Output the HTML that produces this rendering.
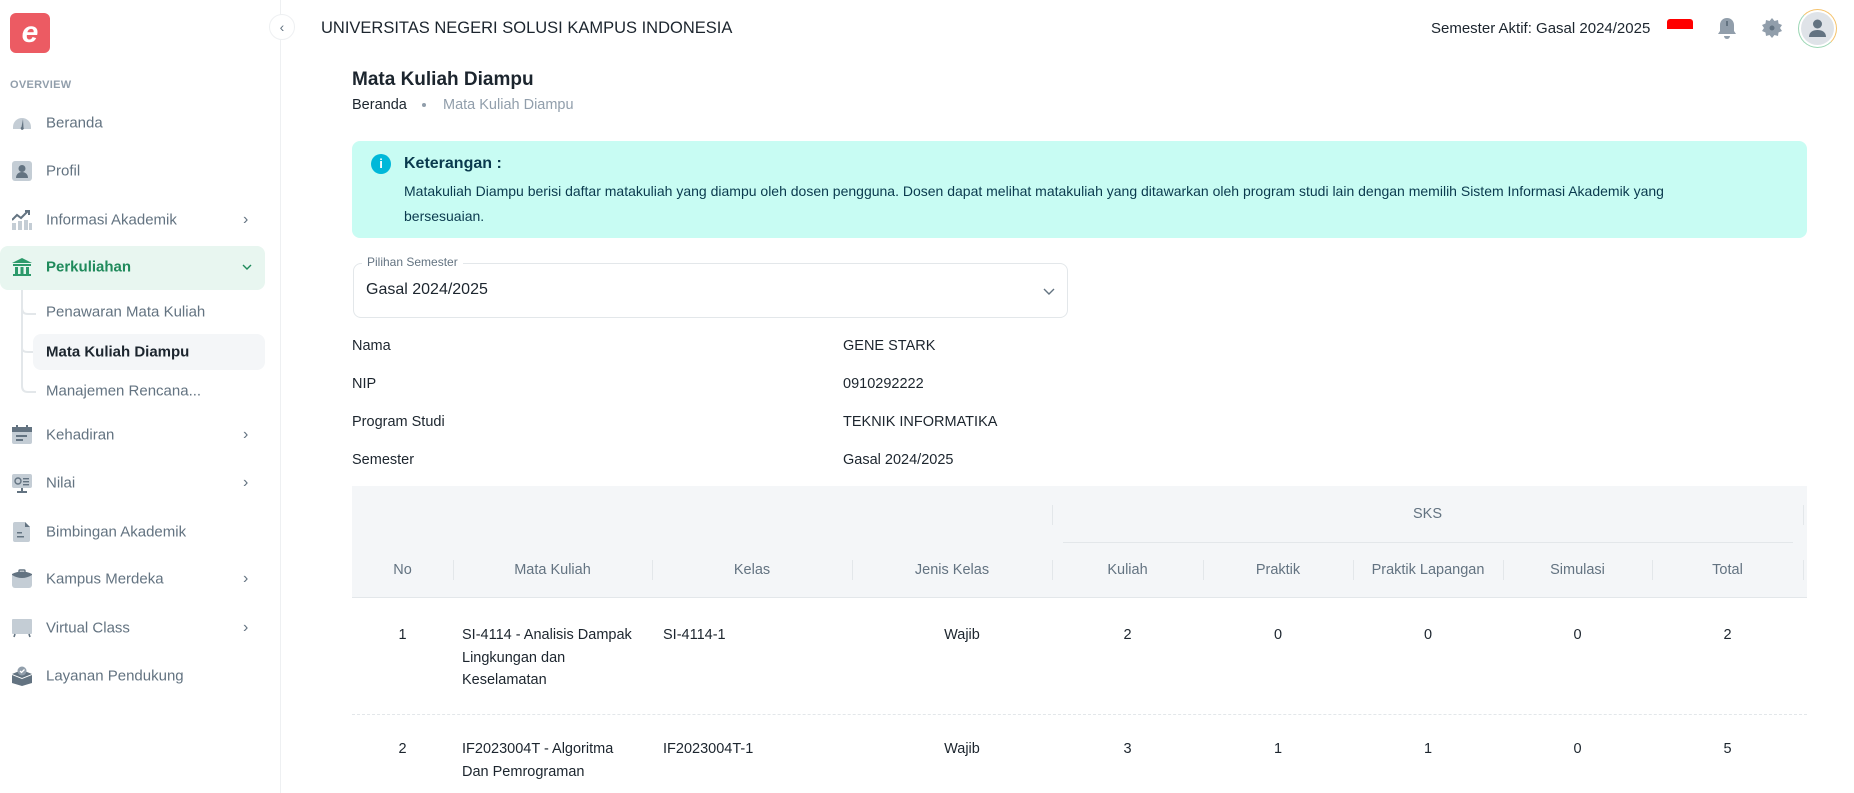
<!DOCTYPE html>
<html><head><meta charset="utf-8"><style>
*{box-sizing:border-box;margin:0;padding:0}
body{width:1854px;height:793px;overflow:hidden;background:#fff;font-family:"Liberation Sans",sans-serif;color:#1c252e;position:relative}
.abs{position:absolute}
.side{position:absolute;left:0;top:0;width:281px;height:793px;border-right:1px solid #eef0f2}
.mi{position:absolute;left:46px;font-size:15px;color:#637381;transform:translateY(-50%);white-space:nowrap}
.ic{position:absolute;left:12px;width:20px;height:20px;transform:translateY(-50%)}
.chev{position:absolute;left:243px;transform:translateY(-50%)}
.lbl{position:absolute;left:352px;font-size:14.5px;transform:translateY(-50%)}
.val{position:absolute;left:843px;font-size:14.5px;transform:translateY(-50%)}
.th{position:absolute;top:570px;transform:translateY(-50%);text-align:center;font-size:14.5px;color:#637381}
.dv{position:absolute;width:1px;height:20px;background:#e3e7ea}
.td{position:absolute;font-size:14.5px;line-height:22.5px;color:#1c252e}
.c{text-align:center}
</style></head><body>
<div class="side">
  <div class="abs" style="left:10px;top:13px;width:40px;height:40px;background:#ec5b63;border-radius:6px;color:#fff;font-size:30px;font-weight:bold;text-align:center;line-height:40px;font-style:italic">e</div>
  <div class="abs" style="left:10px;top:79px;font-size:11px;font-weight:bold;color:#919eab;letter-spacing:.3px">OVERVIEW</div>

  <svg class="ic" style="top:123px" viewBox="0 0 20 20"><path d="M1 14a9 9 0 0 1 18 0v2H1z" fill="#c4cdd5"/><path d="M11 6l-1.5 8a1.5 1.5 0 1 0 2 .5z" fill="#637381"/></svg>
  <div class="mi" style="top:123px">Beranda</div>
  <svg class="ic" style="top:171px" viewBox="0 0 20 20"><rect x="0" y="0" width="20" height="20" rx="3" fill="#c4cdd5"/><circle cx="10" cy="7.5" r="3.5" fill="#637381"/><path d="M4 17c0-4 3-6 6-6s6 2 6 6z" fill="#637381"/></svg>
  <div class="mi" style="top:171px">Profil</div>
  <svg class="ic" style="top:220px" viewBox="0 0 20 20"><rect x="0" y="13" width="4" height="7" fill="#c4cdd5"/><rect x="6" y="11" width="4" height="9" fill="#c4cdd5"/><rect x="12" y="10" width="4" height="10" fill="#c4cdd5"/><rect x="17" y="13" width="3" height="7" fill="#c4cdd5"/><path d="M0 10l5-5 4 3 7-7" stroke="#637381" stroke-width="2" fill="none"/><path d="M13 1h4v4" stroke="#637381" stroke-width="2" fill="none"/></svg>
  <div class="mi" style="top:220px">Informasi Akademik</div>
  <div class="chev" style="top:220px;color:#637381">›</div>

  <div class="abs" style="left:0;top:246px;width:265px;height:44px;background:#e8f6f0;border-radius:8px"></div>
  <svg class="ic" style="top:267px" viewBox="0 0 20 20"><path d="M10 1L0 6h20z" fill="#2d9a6b"/><rect x="1" y="7" width="18" height="2" fill="#2d9a6b"/><rect x="3" y="10" width="3" height="7" fill="#2d9a6b"/><rect x="8.5" y="10" width="3" height="7" fill="#2d9a6b"/><rect x="14" y="10" width="3" height="7" fill="#2d9a6b"/><rect x="1" y="17" width="18" height="2" fill="#2d9a6b"/></svg>
  <div class="mi" style="top:267px;color:#1f8a5b;font-weight:bold">Perkuliahan</div>
  <svg class="abs" style="left:242px;top:264px" width="10" height="7" viewBox="0 0 10 7"><path d="M1 1l4 4 4-4" stroke="#1f8a5b" stroke-width="1.4" fill="none"/></svg>

  <svg class="abs" style="left:20px;top:290px" width="20" height="106"><path d="M2 0v96q0 6 6 6h8M2 18q0 6 6 6h8M2 58q0 4 6 4h8" stroke="#e3e7ea" stroke-width="2" fill="none"/></svg>
  <div class="mi" style="top:312px">Penawaran Mata Kuliah</div>
  <div class="abs" style="left:33px;top:334px;width:232px;height:36px;background:#f4f6f8;border-radius:8px"></div>
  <div class="mi" style="top:352px;color:#1c252e;font-weight:bold">Mata Kuliah Diampu</div>
  <div class="mi" style="top:391px">Manajemen Rencana...</div>

  <svg class="ic" style="top:435px" viewBox="0 0 20 20"><rect x="0" y="2" width="20" height="17" rx="2" fill="#c4cdd5"/><rect x="0" y="2" width="20" height="5" fill="#637381"/><rect x="4" y="0" width="2" height="4" fill="#637381"/><rect x="14" y="0" width="2" height="4" fill="#637381"/><rect x="4" y="10" width="11" height="2" fill="#637381"/><rect x="4" y="14" width="7" height="2" fill="#637381"/></svg>
  <div class="mi" style="top:435px">Kehadiran</div>
  <div class="chev" style="top:435px;color:#637381">›</div>
  <svg class="ic" style="top:483px" viewBox="0 0 20 20"><rect x="0" y="1" width="20" height="14" rx="2" fill="#c4cdd5"/><circle cx="6" cy="8" r="3" fill="none" stroke="#637381" stroke-width="1.4"/><rect x="11" y="5" width="6" height="1.4" fill="#637381"/><rect x="11" y="8" width="6" height="1.4" fill="#637381"/><rect x="11" y="11" width="6" height="1.4" fill="#637381"/><rect x="9" y="15" width="2" height="3" fill="#637381"/><rect x="5" y="18" width="10" height="2" fill="#637381"/></svg>
  <div class="mi" style="top:483px">Nilai</div>
  <div class="chev" style="top:483px;color:#637381">›</div>
  <svg class="ic" style="top:532px" viewBox="0 0 20 20"><path d="M3 0h10l5 5v13a2 2 0 0 1-2 2H3a2 2 0 0 1-2-2V2a2 2 0 0 1 2-2z" fill="#c4cdd5"/><path d="M13 0v5h5z" fill="#637381"/><rect x="5" y="10" width="5" height="1.5" fill="#637381"/><rect x="5" y="14" width="7" height="1.5" fill="#637381"/></svg>
  <div class="mi" style="top:532px">Bimbingan Akademik</div>
  <svg class="ic" style="top:579px" viewBox="0 0 20 20"><rect x="0" y="4" width="20" height="15" rx="3" fill="#c4cdd5"/><path d="M0 6q10 6 20 0v-1q-10-5-20 0z" fill="#637381"/><rect x="7" y="1" width="6" height="3" rx="1" fill="none" stroke="#637381" stroke-width="1.4"/></svg>
  <div class="mi" style="top:579px">Kampus Merdeka</div>
  <div class="chev" style="top:579px;color:#637381">›</div>
  <svg class="ic" style="top:628px" viewBox="0 0 20 20"><rect x="0" y="1" width="20" height="15" rx="1" fill="#c4cdd5"/><path d="M3 16l-1 3M17 16l1 3" stroke="#637381" stroke-width="1.6"/></svg>
  <div class="mi" style="top:628px">Virtual Class</div>
  <div class="chev" style="top:628px;color:#637381">›</div>
  <svg class="ic" style="top:676px" viewBox="0 0 20 20"><path d="M0 8l10-4 10 4-10 4z" fill="#637381"/><path d="M0 9l10 4 10-4v8l-10 3-10-3z" fill="#637381"/><circle cx="10" cy="5" r="4.5" fill="#919eab"/><path d="M8 5l1.5 1.5 3-3" stroke="#fff" stroke-width="1.3" fill="none"/></svg>
  <div class="mi" style="top:676px">Layanan Pendukung</div>
</div>
<div class="abs" style="left:269px;top:14px;width:26px;height:26px;border-radius:50%;border:1px solid #eef0f2;background:#fff;text-align:center;line-height:24px;font-size:14px;color:#637381">‹</div>

<div class="abs" style="left:321px;top:19px;font-size:16.5px;color:#1c252e">UNIVERSITAS NEGERI SOLUSI KAMPUS INDONESIA</div>
<div class="abs" style="left:1431px;top:20px;font-size:15px;color:#1c252e">Semester Aktif: Gasal 2024/2025</div>
<div class="abs" style="left:1667px;top:19px;width:26px;height:10px;background:#f00;border-radius:3px 3px 0 0"></div>
<svg class="abs" style="left:1717px;top:17px" width="20" height="22" viewBox="0 0 20 22"><path d="M10 1c4 0 7 3 7 7v6l2 3H1l2-3V8c0-4 3-7 7-7z" fill="#919eab"/><rect x="9" y="4" width="2" height="5" fill="#637381"/><path d="M7 19a3 3 0 0 0 6 0z" fill="#919eab"/></svg>
<svg class="abs" style="left:1762px;top:18px" width="20" height="20" viewBox="0 0 20 20"><path d="M10 0l2.5 3 3.5-1 .5 3.5 3.5 1.5-2 3 2 3-3.5 1.5-.5 3.5-3.5-1-2.5 3-2.5-3-3.5 1-.5-3.5L0 13l2-3-2-3 3.5-1.5L4 2l3.5 1z" fill="#919eab"/><circle cx="10" cy="10" r="2.5" fill="#637381"/></svg>
<div class="abs" style="left:1798px;top:9px;width:39px;height:39px;border-radius:50%;border:1.5px solid #9bd6b4;border-top-color:#f5c26b;border-right-color:#f5c26b"></div>
<div class="abs" style="left:1801px;top:12px;width:33px;height:33px;border-radius:50%;background:#dfe3e8"></div>
<svg class="abs" style="left:1807px;top:18px" width="21" height="21" viewBox="0 0 21 21"><circle cx="10.5" cy="6" r="4.5" fill="#637381"/><path d="M2 19c0-5 4-7 8.5-7s8.5 2 8.5 7z" fill="#637381"/></svg>

<div class="abs" style="left:352px;top:69px;font-size:19px;font-weight:bold">Mata Kuliah Diampu</div>
<div class="abs" style="left:352px;top:97px;font-size:14.5px">Beranda</div>
<div class="abs" style="left:422px;top:103px;width:4px;height:4px;border-radius:50%;background:#919eab"></div>
<div class="abs" style="left:443px;top:97px;font-size:14.5px;color:#919eab">Mata Kuliah Diampu</div>

<div class="abs" style="left:352px;top:141px;width:1455px;height:97px;background:#c8fcf3;border-radius:8px"></div>
<div class="abs" style="left:371px;top:154px;width:20px;height:20px;border-radius:50%;background:#00b8d9;color:#fff;font-size:13px;font-weight:bold;text-align:center;line-height:20px">i</div>
<div class="abs" style="left:404px;top:155px;font-size:16px;font-weight:bold;color:#0a3a4e">Keterangan :</div>
<div class="abs" style="left:404px;top:179px;width:1275px;font-size:14px;line-height:25px;color:#0a3a4e">Matakuliah Diampu berisi daftar matakuliah yang diampu oleh dosen pengguna. Dosen dapat melihat matakuliah yang ditawarkan oleh program studi lain dengan memilih Sistem Informasi Akademik yang bersesuaian.</div>

<div class="abs" style="left:353px;top:263px;width:715px;height:55px;border:1px solid #e3e7ea;border-radius:8px"></div>
<div class="abs" style="left:362px;top:255px;padding:0 5px;background:#fff;font-size:12px;color:#637381">Pilihan Semester</div>
<div class="abs" style="left:366px;top:281px;font-size:16px">Gasal 2024/2025</div>
<svg class="abs" style="left:1043px;top:288px" width="12" height="8" viewBox="0 0 12 8"><path d="M1 1l5 5 5-5" stroke="#637381" stroke-width="1.4" fill="none"/></svg>

<div class="lbl" style="top:346px">Nama</div><div class="val" style="top:346px">GENE STARK</div>
<div class="lbl" style="top:384px">NIP</div><div class="val" style="top:384px">0910292222</div>
<div class="lbl" style="top:422px">Program Studi</div><div class="val" style="top:422px">TEKNIK INFORMATIKA</div>
<div class="lbl" style="top:460px">Semester</div><div class="val" style="top:460px">Gasal 2024/2025</div>

<div class="abs" style="left:352px;top:486px;width:1455px;height:112px;background:#f4f6f8;border-bottom:1px solid #e3e7ea"></div>
<div class="th" style="left:1052px;width:751px;top:514px">SKS</div>
<div class="abs" style="left:1063px;top:542px;width:730px;height:1px;background:#e3e7ea"></div>
<div class="dv" style="left:1052px;top:505px"></div><div class="dv" style="left:1803px;top:505px"></div>
<div class="th" style="left:352px;width:101px">No</div>
<div class="th" style="left:453px;width:199px">Mata Kuliah</div>
<div class="th" style="left:652px;width:200px">Kelas</div>
<div class="th" style="left:852px;width:200px">Jenis Kelas</div>
<div class="th" style="left:1052px;width:151px">Kuliah</div>
<div class="th" style="left:1203px;width:150px">Praktik</div>
<div class="th" style="left:1353px;width:150px">Praktik Lapangan</div>
<div class="th" style="left:1503px;width:149px">Simulasi</div>
<div class="th" style="left:1652px;width:151px">Total</div>
<div class="dv" style="left:453px;top:560px"></div><div class="dv" style="left:652px;top:560px"></div><div class="dv" style="left:852px;top:560px"></div><div class="dv" style="left:1052px;top:560px"></div><div class="dv" style="left:1203px;top:560px"></div><div class="dv" style="left:1353px;top:560px"></div><div class="dv" style="left:1503px;top:560px"></div><div class="dv" style="left:1652px;top:560px"></div><div class="dv" style="left:1803px;top:560px"></div>

<div class="td c" style="left:352px;width:101px;top:624px">1</div>
<div class="td" style="left:462px;width:180px;top:624px">SI-4114 - Analisis Dampak Lingkungan dan Keselamatan</div>
<div class="td" style="left:663px;top:624px">SI-4114-1</div>
<div class="td c" style="left:862px;width:200px;top:624px">Wajib</div>
<div class="td c" style="left:1052px;width:151px;top:624px">2</div>
<div class="td c" style="left:1203px;width:150px;top:624px">0</div>
<div class="td c" style="left:1353px;width:150px;top:624px">0</div>
<div class="td c" style="left:1503px;width:149px;top:624px">0</div>
<div class="td c" style="left:1652px;width:151px;top:624px">2</div>
<div class="abs" style="left:352px;top:714px;width:1455px;border-top:1px dashed #e3e7ea"></div>
<div class="td c" style="left:352px;width:101px;top:738px">2</div>
<div class="td" style="left:462px;width:165px;top:738px">IF2023004T - Algoritma Dan Pemrograman</div>
<div class="td" style="left:663px;top:738px">IF2023004T-1</div>
<div class="td c" style="left:862px;width:200px;top:738px">Wajib</div>
<div class="td c" style="left:1052px;width:151px;top:738px">3</div>
<div class="td c" style="left:1203px;width:150px;top:738px">1</div>
<div class="td c" style="left:1353px;width:150px;top:738px">1</div>
<div class="td c" style="left:1503px;width:149px;top:738px">0</div>
<div class="td c" style="left:1652px;width:151px;top:738px">5</div>
</body></html>
